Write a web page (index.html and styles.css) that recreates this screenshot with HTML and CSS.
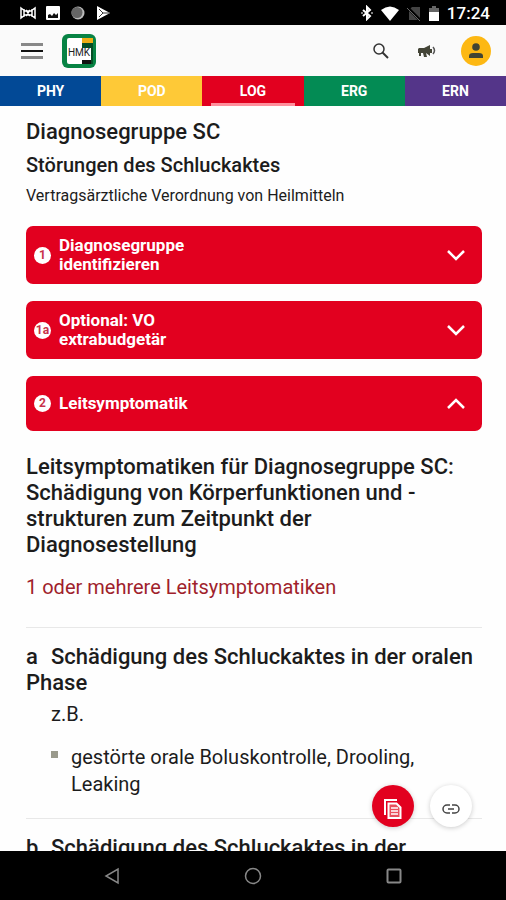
FILE: index.html
```html
<!DOCTYPE html>
<html lang="de">
<head>
    <meta charset="UTF-8">
    <meta name="viewport" content="width=device-width, initial-scale=1.0">
    <title>Diagnosegruppe SC</title>
    <link rel="stylesheet" href="styles.css">
</head>
<body>
    <div class="status-bar">
        <div class="status-icons">
            <svg width="16" height="14" viewBox="0 0 16 14" fill="none" stroke="#fff" stroke-width="1.5"><path d="M1 2l4 3h6l4-3v10l-4-3H5l-4 3zM4 3v8M12 3v8M6 4l4 6M10 4l-4 6"/></svg>
            <svg width="14" height="14" viewBox="0 0 14 14"><rect width="14" height="14" rx="1" fill="#fff"/><path d="M2 12V9l2-1 2 2 2-3 2 2 2-2v5z" fill="#111"/></svg>
            <svg width="16" height="14" viewBox="0 0 16 14"><circle cx="8" cy="7" r="6.5" fill="#bbb"/><circle cx="7" cy="6.5" r="5.5" fill="#666"/></svg>
            <svg width="15" height="14" viewBox="0 0 15 14"><path d="M1 0l13 7-13 7z" fill="#fff"/><path d="M3 3l4 4-4 4M7 7h6" fill="none" stroke="#333"/></svg>
        </div>
        <div class="status-icons status-right">
            <svg width="12" height="16" viewBox="0 0 12 16" fill="none" stroke="#fff" stroke-width="2"><path d="M2 5l7 6-3 3V2l3 3-7 6"/><path d="M11 7v2M1 7v2" stroke-width="1"/></svg>
            <svg width="18" height="15" viewBox="0 0 18 15"><path d="M0 4Q9-3 18 4L9 15z" fill="#fff"/></svg>
            <svg width="14" height="15" viewBox="0 0 14 15"><path d="M5 1h8v13H2V4z" fill="#444"/><path d="M0 1l13 13" stroke="#000" stroke-width="3"/><path d="M0 2l13 13" stroke="#666"/></svg>
            <svg width="10" height="15" viewBox="0 0 10 15"><path d="M3 0h4v2h3v5H0V2h3z" fill="#666"/><path d="M0 6h10v9H0z" fill="#fff"/></svg>
            <span class="clock">17:24</span>
        </div>
    </div>

    <header class="app-bar">
        <button class="icon-button" aria-label="Menü">
            <svg width="22" height="16" viewBox="0 0 22 16"><path d="M0 1.5h22M0 14.5h22" stroke="#888" stroke-width="3"/><path d="M0 8h22" stroke="#111" stroke-width="2"/></svg>
        </button>
        <a class="logo" href="#" aria-label="HMK">
            <svg width="34" height="34" viewBox="0 0 34 34">
                <rect width="34" height="34" rx="6" fill="#078344"/>
                <path d="M20 4h11v26H20z" fill="#064d25"/>
                <path d="M5 6q0-2 2-2h13v26H7q-2 0-2-2z" fill="#fff"/>
                <path d="M20 4h11v5H20z" fill="#efad15"/>
                <path d="M20 14h9v12h-9z" fill="#fff"/>
                <path d="M20 26h9v4h-9z" fill="#111"/>
                <text x="17" y="22" text-anchor="middle" class="logo-text">HMK</text>
            </svg>
        </a>
        <div class="app-actions">
            <button class="icon-button" aria-label="Suche">
                <svg width="16" height="16" viewBox="0 0 16 16" fill="none" stroke="#333"><circle cx="6" cy="6" r="5" stroke-width="1.5"/><path d="M9.5 9.5L15 15" stroke-width="2"/></svg>
            </button>
            <button class="icon-button" aria-label="Neuigkeiten">
                <svg width="18" height="14" viewBox="0 0 18 14"><path d="M1 4h5l6-3v11L8 9l1 4H6L5 9H3v3H1V9H0V5z" fill="#444537"/><path d="M13 5v4" stroke="#444537" stroke-width="2"/><path d="M15 3q3 3.5 0 7" fill="none" stroke="#555" stroke-width="1.5"/></svg>
            </button>
            <button class="icon-button avatar" aria-label="Profil">
                <svg width="14" height="16" viewBox="0 0 14 16" fill="#424433"><circle cx="7" cy="4" r="3.8"/><path d="M0 15v-2q0-3 4-3h6q4 0 4 3v2z"/></svg>
            </button>
        </div>
    </header>

    <nav class="tabs">
        <a class="tab phy" href="#">PHY</a>
        <a class="tab pod" href="#">POD</a>
        <a class="tab log active" href="#">LOG</a>
        <a class="tab erg" href="#">ERG</a>
        <a class="tab ern" href="#">ERN</a>
    </nav>

    <main class="content">
        <h1>Diagnosegruppe SC</h1>
        <p class="subtitle">Störungen des Schluckaktes</p>
        <p class="note">Vertragsärztliche Verordnung von Heilmitteln</p>

        <div class="accordion">
            <button class="panel" aria-expanded="false">
                <span class="step">1</span>
                <span class="panel-title">Diagnosegruppe identifizieren</span>
                <svg width="18" height="12" viewBox="0 0 18 12" fill="none" stroke="#fff" stroke-width="2.5"><path d="M1 2l8 8 8-8"/></svg>
            </button>
            <button class="panel" aria-expanded="false">
                <span class="step">1a</span>
                <span class="panel-title">Optional: VO extrabudgetär</span>
                <svg width="18" height="12" viewBox="0 0 18 12" fill="none" stroke="#fff" stroke-width="2.5"><path d="M1 2l8 8 8-8"/></svg>
            </button>
            <button class="panel" aria-expanded="true">
                <span class="step">2</span>
                <span class="panel-title">Leitsymptomatik</span>
                <svg width="18" height="12" viewBox="0 0 18 12" fill="none" stroke="#fff" stroke-width="2.5"><path d="M1 10l8-8 8 8"/></svg>
            </button>
        </div>

        <h2>Leitsymptomatiken für Diagnosegruppe SC: Schädigung von Körperfunktionen und -<wbr>strukturen zum Zeitpunkt der Diagnosestellung</h2>
        <p class="hint">1 oder mehrere Leitsymptomatiken</p>

        <section class="symptom">
            <h3><span class="letter">a</span>Schädigung des Schluckaktes in der oralen Phase</h3>
            <p class="example">z.B.</p>
            <ul>
                <li>gestörte orale Boluskontrolle, Drooling, Leaking</li>
            </ul>
        </section>
        <section class="symptom">
            <h3><span class="letter">b</span>Schädigung des Schluckaktes in der</h3>
        </section>

        <div class="fabs">
            <button class="fab fab-red" aria-label="Kopieren">
                <svg width="18" height="20" viewBox="0 0 18 20" fill="none" stroke="#fff"><path d="M1 16V1h12" stroke-width="2"/><path d="M4.5 4.5h8l4 4V19h-12z" stroke-width="2" fill="#e8505c"/><path d="M7 9h7M7 12h7M7 15h7" stroke-width="1.5"/></svg>
            </button>
            <button class="fab" aria-label="Link">
                <svg width="18" height="10" viewBox="0 0 18 10" fill="none" stroke="#444" stroke-width="1.5"><path d="M8 1H5a4 4 0 0 0 0 8h3M10 1h3a4 4 0 0 1 0 8h-3M6 5h6"/></svg>
            </button>
        </div>
    </main>

    <div class="system-nav">
        <button class="icon-button" aria-label="Zurück">
            <svg width="16" height="18" viewBox="0 0 16 18" fill="none" stroke="#888" stroke-width="1.5"><path d="M14 2v14L2 9z"/></svg>
        </button>
        <button class="icon-button" aria-label="Startseite">
            <svg width="18" height="18" viewBox="0 0 18 18" fill="none" stroke="#888" stroke-width="1.5"><circle cx="9" cy="9" r="7.5"/></svg>
        </button>
        <button class="icon-button" aria-label="Übersicht">
            <svg width="16" height="16" viewBox="0 0 16 16" fill="none" stroke="#888" stroke-width="2"><rect x="1.5" y="1.5" width="13" height="13" rx="1"/></svg>
        </button>
    </div>
</body>
</html>
```
FILE: styles.css
```css
* {
    box-sizing: border-box;
}
body {
    margin: 0;
    height: 100vh;
    display: flex;
    flex-direction: column;
    overflow: hidden;
    background-color: #fefefe;
    color: #1c1c1c;
    font-family: Roboto, "Liberation Sans", sans-serif;
}
button {
    border: none;
    font-family: inherit;
    cursor: pointer;
}
svg {
    display: block;
    flex-shrink: 0;
}
h1, h2, h3, p, ul {
    margin: 0;
    padding: 0;
}

/* Status bar */
.status-bar {
    display: flex;
    justify-content: space-between;
    align-items: center;
    height: 25px;
    padding: 1px 16px 0 20px;
    background-color: #000;
    color: #fff;
}
.status-icons {
    display: flex;
    align-items: center;
    gap: 10px;
}
.status-right {
    gap: 8px;
}
.clock {
    font-size: 17px;
    font-weight: 500;
    line-height: 24px;
}

/* App bar */
.app-bar {
    display: flex;
    align-items: center;
    height: 51px;
    padding: 0 15px 0 21px;
    gap: 19px;
    background-color: #fafafa;
}
.icon-button {
    display: flex;
    align-items: center;
    justify-content: center;
    padding: 0;
    background: none;
}
.logo-text {
    font-size: 10px;
    fill: #222;
}
.app-actions {
    display: flex;
    align-items: center;
    gap: 22px;
    margin-left: auto;
}
.app-actions .icon-button {
    min-width: 24px;
    height: 30px;
}
.app-actions .avatar {
    width: 30px;
    border-radius: 50%;
    background-color: #fdb813;
}

/* Tabs */
.tabs {
    display: flex;
    height: 30px;
}
.tab {
    flex: 1;
    padding: 0 9px;
    color: #fff;
    font-size: 14px;
    font-weight: 700;
    line-height: 30px;
    text-align: center;
    text-decoration: none;
}
.tab.active::after {
    content: "";
    display: block;
    height: 3px;
    margin-top: -3px;
    background-color: #ff8f9c;
}
.phy { background-color: #024996; }
.pod { background-color: #fec937; }
.log { background-color: #e2001f; }
.erg { background-color: #038b54; }
.ern { background-color: #543589; }

/* Content */
.content {
    position: relative;
    flex: 1;
    min-height: 0;
    padding: 12px 24px 0 26px;
    overflow: hidden;
}
h1 {
    font-size: 22px;
    font-weight: 500;
    line-height: 28px;
}
.subtitle {
    margin-top: 6px;
    font-size: 20px;
    font-weight: 500;
    line-height: 26px;
}
.note {
    margin-top: 8px;
    font-size: 16px;
    line-height: 20px;
}
.accordion {
    display: flex;
    flex-direction: column;
    gap: 17px;
    margin-top: 20px;
}
.panel {
    display: flex;
    align-items: center;
    gap: 8px;
    width: 100%;
    min-height: 55px;
    padding: 10px 17px 10px 8px;
    border-radius: 7px;
    background-color: #e2001f;
    color: #fff;
    text-align: left;
}
.panel svg {
    margin-left: auto;
}
.step {
    flex-shrink: 0;
    width: 17px;
    height: 17px;
    border-radius: 50%;
    background-color: #fff;
    color: #c8324a;
    font-size: 12px;
    font-weight: 700;
    line-height: 17px;
    text-align: center;
}
.panel-title {
    max-width: 150px;
    font-size: 17px;
    font-weight: 700;
    line-height: 19px;
}
h2, h3 {
    font-size: 22px;
    font-weight: 500;
    line-height: 26px;
}
h2 {
    margin-top: 23px;
}
.hint {
    margin: 16px 0 26px;
    color: #a01f2c;
    font-size: 20px;
    line-height: 27px;
}
.symptom {
    padding: 16px 0 20px;
    border-top: 1px solid #e8e8e8;
}
.letter {
    display: inline-block;
    min-width: 25px;
}
.example {
    margin: 5px 0 16px 25px;
    font-size: 20px;
    line-height: 27px;
}
.symptom ul {
    margin-left: 25px;
    list-style: none;
}
.symptom li {
    display: flex;
    gap: 13px;
    max-width: 390px;
    font-size: 20px;
    line-height: 27px;
}
.symptom li::before {
    content: "";
    flex-shrink: 0;
    width: 7px;
    height: 7px;
    margin-top: 7px;
    background-color: #9a9a8c;
}

/* Floating buttons over the text */
.fabs {
    position: absolute;
    right: 34px;
    bottom: 24px;
    display: flex;
    gap: 16px;
}
.fab {
    display: flex;
    align-items: center;
    justify-content: center;
    width: 42px;
    height: 42px;
    padding: 6px 0 0;
    border-radius: 50%;
    background-color: #fff;
    box-shadow: 0 1px 5px rgba(0, 0, 0, 0.2);
}
.fab-red {
    background-color: #e2001f;
}

/* System navigation */
.system-nav {
    display: flex;
    align-items: center;
    justify-content: center;
    gap: 124px;
    height: 49px;
    background-color: #000;
}
```
